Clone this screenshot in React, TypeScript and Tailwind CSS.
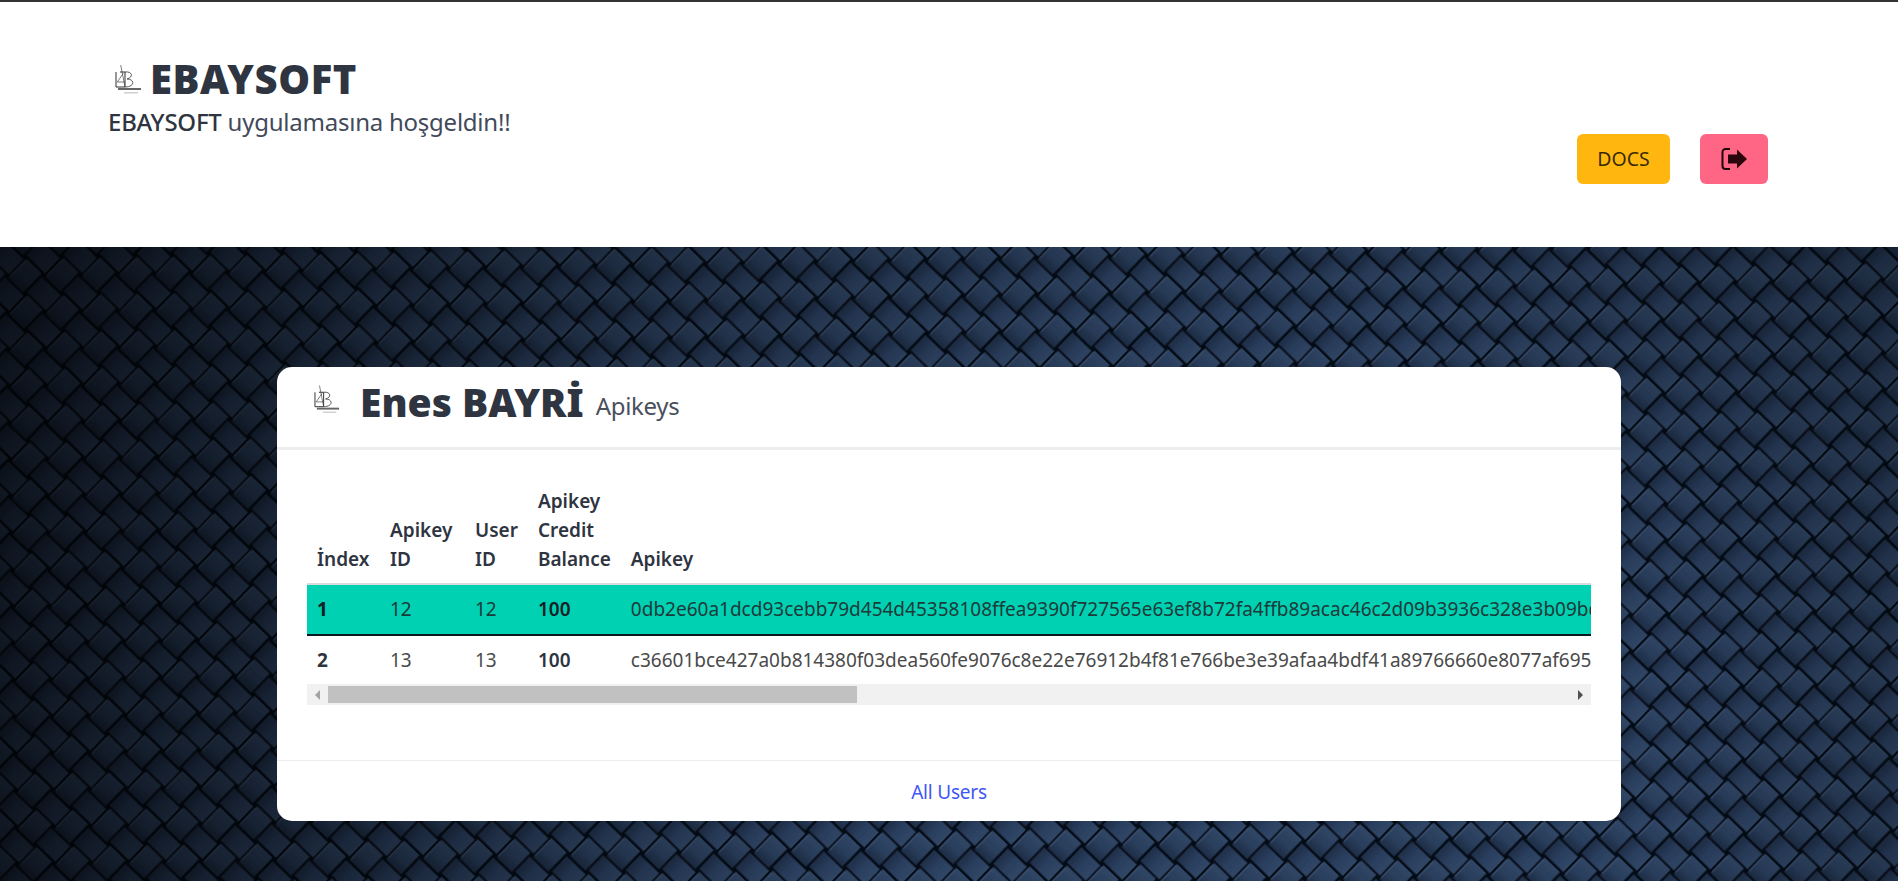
import React from "react";

function Logo({ className }: { className: string }) {
  return (
    <svg viewBox="0 0 27 30" className={className} fill="none" aria-hidden="true">
      <path d="M1 8V23H10V8H5" stroke="#2e2e2e" strokeWidth="1" />
      <path d="M5.700 1L10 23M2.300 18L8.300 9.300M2.300 18H10" stroke="#444" strokeWidth="0.7" />
      <path d="M10 8C17 7 19 13 12 15C20 15 20 23 10 23" stroke="#444" strokeWidth="0.9" />
      <rect x="3" y="24" width="23" height="2" fill="#666" />
      <rect x="9" y="28" width="14" height="1.500" fill="#d0d0d0" />
    </svg>
  );
}

function Weave() {
  return (
    <svg className="absolute inset-0 w-full h-full overflow-hidden" aria-hidden="true">
      <defs>
        <filter id="soft" x="0" y="0" width="100%" height="100%">
          <feGaussianBlur stdDeviation="0.7" />
        </filter>
        <linearGradient id="ta" x1="0" y1="0" x2="1" y2="0">
          <stop offset="0" stopColor="#1e2e48" />
          <stop offset="0.5" stopColor="#2b3f5f" />
          <stop offset="1" stopColor="#304666" />
        </linearGradient>
        <linearGradient id="tb" x1="0" y1="0" x2="0" y2="1">
          <stop offset="0" stopColor="#304666" />
          <stop offset="0.55" stopColor="#2a3e5c" />
          <stop offset="1" stopColor="#1d2d46" />
        </linearGradient>
        <pattern id="w" width="52" height="52" patternUnits="userSpaceOnUse" patternTransform="translate(6 -8) rotate(44)">
          <rect width="52" height="52" fill="#060b15" />
          <rect x="0" y="2.500" width="26.500" height="21" fill="url(#ta)" />
          <rect x="28.500" y="0" width="21" height="26.500" fill="url(#tb)" />
          <rect x="25.500" y="28.500" width="26.500" height="21" fill="url(#ta)" />
          <rect x="2.500" y="25.500" width="21" height="26.500" fill="url(#tb)" />
          <path d="M29 2V24M3 28V50" stroke="#43597a" strokeWidth="1" />
        </pattern>
        <radialGradient id="v" gradientUnits="userSpaceOnUse" cx="1250" cy="540" r="1300">
          <stop offset="0" stopColor="#000" stopOpacity="0" />
          <stop offset="0.3" stopColor="#000" stopOpacity="0" />
          <stop offset="1" stopColor="#000" stopOpacity="0.68" />
        </radialGradient>
      </defs>
      <rect x="-10" y="-10" width="1920" height="660" fill="url(#w)" filter="url(#soft)" />
      <rect width="100%" height="100%" fill="url(#v)" />
    </svg>
  );
}

const key1 =
  "0db2e60a1dcd93cebb79d454d45358108ffea9390f727565e63ef8b72fa4ffb89acac46c2d09b3936c328e3b09bd4f2a17c6e05d8a";
const key2 =
  "c36601bce427a0b814380f03dea560fe9076c8e22e76912b4f81e766be3e39afaa4bdf41a89766660e8077af69529d13b7c4e2f06a";

const th = "px-[10px] pt-[6px] pb-[9px] align-bottom text-left font-semibold text-[#2e3440] border-b-2 border-[#dbdbdb]";
const td1 = "px-[10px] py-[10px] align-top";
const td2 = "px-[10px] pt-[10px] pb-[9px] align-top";

export default function App() {
  return (
    <div className="w-[1898px] h-[881px] overflow-hidden flex flex-col border-t-2 border-[#333333] text-[#4a4a4a] text-[19px] font-['Noto_Sans','Open_Sans',sans-serif]">
      <header className="h-[245px] shrink-0 bg-white flex justify-between pl-[108px] pr-[130px]">
        <div className="pt-[52px]">
          <div className="flex items-center h-[50px] pl-[7px]">
            <Logo className="w-[27px] h-[30px] mr-[8px]" />
            <span className="text-[40px] leading-[50px] font-black text-[#2e3440] tracking-[0.6px]">EBAYSOFT</span>
          </div>
          <p className="text-[24px] leading-[28px] text-[#424a5a] tracking-[-0.24px] mt-[4px]">
            <span className="text-[#2e3440] font-medium">EBAYSOFT</span> uygulamasına hoşgeldin!!
          </p>
        </div>
        <div className="flex items-start gap-[30px] pt-[132px]">
          <button className="w-[93px] h-[50px] rounded-[6px] bg-[#ffb70f] text-black/80 text-[19.5px]">DOCS</button>
          <button className="w-[68px] h-[50px] rounded-[6px] bg-[#ff6685] flex items-center justify-center">
            <svg viewBox="0 0 26 22" className="w-[26px] h-[22px]" aria-hidden="true">
              <path d="M9 1H4.500A3 3 0 0 0 1.500 4V18A3 3 0 0 0 4.500 21H9" fill="none" stroke="#1d0508" strokeWidth="2" />
              <path d="M7 6.500H16V1.500L26 11L16 20.500V15.500H7Z" fill="#2a060c" />
            </svg>
          </button>
        </div>
      </header>
      <main className="relative flex-1 flex justify-center items-start pt-[120px]">
        <Weave />
        <section className="relative w-[1344px] h-[454px] bg-white rounded-[15px] flex flex-col overflow-hidden">
          <div className="h-[83px] shrink-0 flex items-center pl-[37px] border-b-[3px] border-[#ededed]">
            <Logo className="w-[26px] h-[30px] -mt-[16px] mr-[20px]" />
            <span className="text-[39px] leading-[44px] font-black text-[#2e3440] -mt-[11px]">Enes BAYRİ</span>
            <span className="text-[24px] text-[#4a4f5c] ml-[12px] tracking-[-0.3px] -mt-[3px]">Apikeys</span>
          </div>
          <div className="flex-1 px-[30px] pt-[31px]">
            <div className="w-[1284px] overflow-hidden">
              <table className="w-max border-collapse whitespace-nowrap leading-[29px] text-[19px]">
                <thead>
                  <tr>
                    <th className={th + " w-[73px]"}>İndex</th>
                    <th className={th + " w-[85px]"}>Apikey<br />ID</th>
                    <th className={th + " w-[60px]"}>User<br />ID</th>
                    <th className={th + " w-[91px]"}>Apikey<br />Credit<br />Balance</th>
                    <th className={th}>Apikey</th>
                  </tr>
                </thead>
                <tbody>
                  <tr className="bg-[#00d1b2] text-[#1d3a3a] border-b-2 border-[#0a1a1c]">
                    <td className={td1 + " font-bold text-[#172026]"}>1</td>
                    <td className={td1}>12</td>
                    <td className={td1}>12</td>
                    <td className={td1 + " font-semibold text-[#172026]"}>100</td>
                    <td className={td1}>{key1}</td>
                  </tr>
                  <tr>
                    <td className={td2 + " font-bold text-[#2e3440]"}>2</td>
                    <td className={td2}>13</td>
                    <td className={td2}>13</td>
                    <td className={td2 + " font-semibold text-[#2e3440]"}>100</td>
                    <td className={td2}>{key2}</td>
                  </tr>
                </tbody>
              </table>
            </div>
            <div className="w-[1284px] h-[21px] bg-[#f1f1f1] flex items-center">
              <div className="w-[21px] flex items-center pl-[8px]">
                <span className="w-0 h-0 border-y-[5px] border-y-transparent border-r-[5px] border-r-[#a3a3a3]" />
              </div>
              <div className="w-[529px] h-[17px] bg-[#c1c1c1]" />
              <div className="flex-1 flex items-center justify-end pr-[8px]">
                <span className="w-0 h-0 border-y-[5px] border-y-transparent border-l-[5px] border-l-[#505050]" />
              </div>
            </div>
          </div>
          <footer className="h-[61px] shrink-0 pt-[2px] border-t border-[#ededed] flex items-center justify-center text-[19px] text-[#3e56f5] tracking-[-0.2px]">
            All Users
          </footer>
        </section>
      </main>
    </div>
  );
}
